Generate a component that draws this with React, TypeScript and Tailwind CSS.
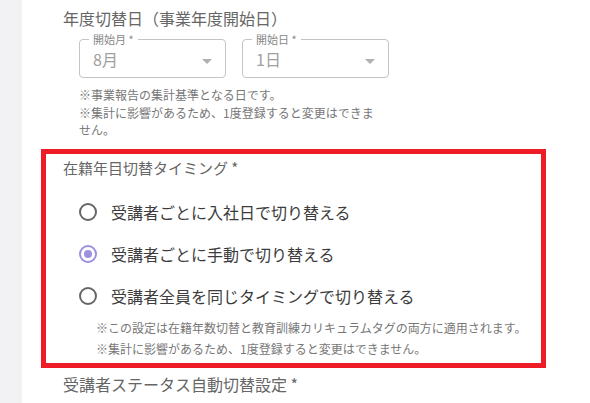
import React from "react";

const font = { fontFamily: '"Noto Sans CJK JP", "Noto Sans", sans-serif' };

function Select({ label, value }: { label: string; value: string }) {
  return (
    <div className="relative w-[147px] h-[39px] rounded-[4px] border border-[#c4c4c4]">
      <span className="absolute left-[9px] top-[-9px] bg-white px-[4px] text-[11px] leading-[16px] text-[#888]">
        {label}
      </span>
      <div className="flex h-full items-center justify-between pl-[13px] pr-[13px] pt-[1px]">
        <span className="text-[16px] leading-[20px] text-[#a0a0a0]">{value}</span>
        <svg width="10" height="5" viewBox="0 0 10 5" className="mt-[4px]">
          <path d="M0 0 L10 0 L5 5 Z" fill="#b0b0b0" />
        </svg>
      </div>
    </div>
  );
}

function Radio({ label, checked }: { label: string; checked?: boolean }) {
  return (
    <div className="flex h-[42px] items-center pl-[33px]">
      {checked ? (
        <span className="flex h-[18px] w-[18px] items-center justify-center rounded-full border-2 border-[#9d90dd]">
          <span className="h-[8px] w-[8px] rounded-full bg-[#9d90dd]" />
        </span>
      ) : (
        <span className="h-[18px] w-[18px] rounded-full border-2 border-[#666]" />
      )}
      <span className="ml-[14px] text-[16px] leading-[24px] text-[#3c3c3c]">{label}</span>
    </div>
  );
}

export default function App() {
  return (
    <div className="flex h-[403px] w-[590px] overflow-hidden bg-white" style={font}>
      <div className="w-[22px] shrink-0 bg-[#f2f2f4]" />
      <div className="ml-[19px] flex flex-col">
        <div className="pl-[22px] pt-[6px] text-[16px] leading-[24px] text-[#666]">
          年度切替日（事業年度開始日）
        </div>
        <div className="ml-[38px] mt-[9px] flex gap-[16px]">
          <Select label="開始月 *" value="8月" />
          <Select label="開始日 *" value="1日" />
        </div>
        <div className="ml-[38px] mt-[8px] w-[306px] text-[12px] leading-[17.5px] text-[#777]">
          <p>※事業報告の集計基準となる日です。</p>
          <p>※集計に影響があるため、1度登録すると変更はできません。</p>
        </div>
        <div className="mt-[10px] w-[505px] border-[5px] border-[#ee1c27] pb-[4px]">
          <div className="pl-[17px] pt-[2px] text-[15px] leading-[24px] text-[#666]">
            在籍年目切替タイミング *
          </div>
          <div className="mt-[11px]">
            <Radio label="受講者ごとに入社日で切り替える" />
            <Radio label="受講者ごとに手動で切り替える" checked />
            <Radio label="受講者全員を同じタイミングで切り替える" />
          </div>
          <div className="pl-[50px] text-[12px] leading-[21px] text-[#777]">
            <p>※この設定は在籍年数切替と教育訓練カリキュラムタグの両方に適用されます。</p>
            <p>※集計に影響があるため、1度登録すると変更はできません。</p>
          </div>
        </div>
        <div className="mt-[4px] pl-[22px] text-[16px] leading-[24px] text-[#666]">
          受講者ステータス自動切替設定 *
        </div>
      </div>
    </div>
  );
}
